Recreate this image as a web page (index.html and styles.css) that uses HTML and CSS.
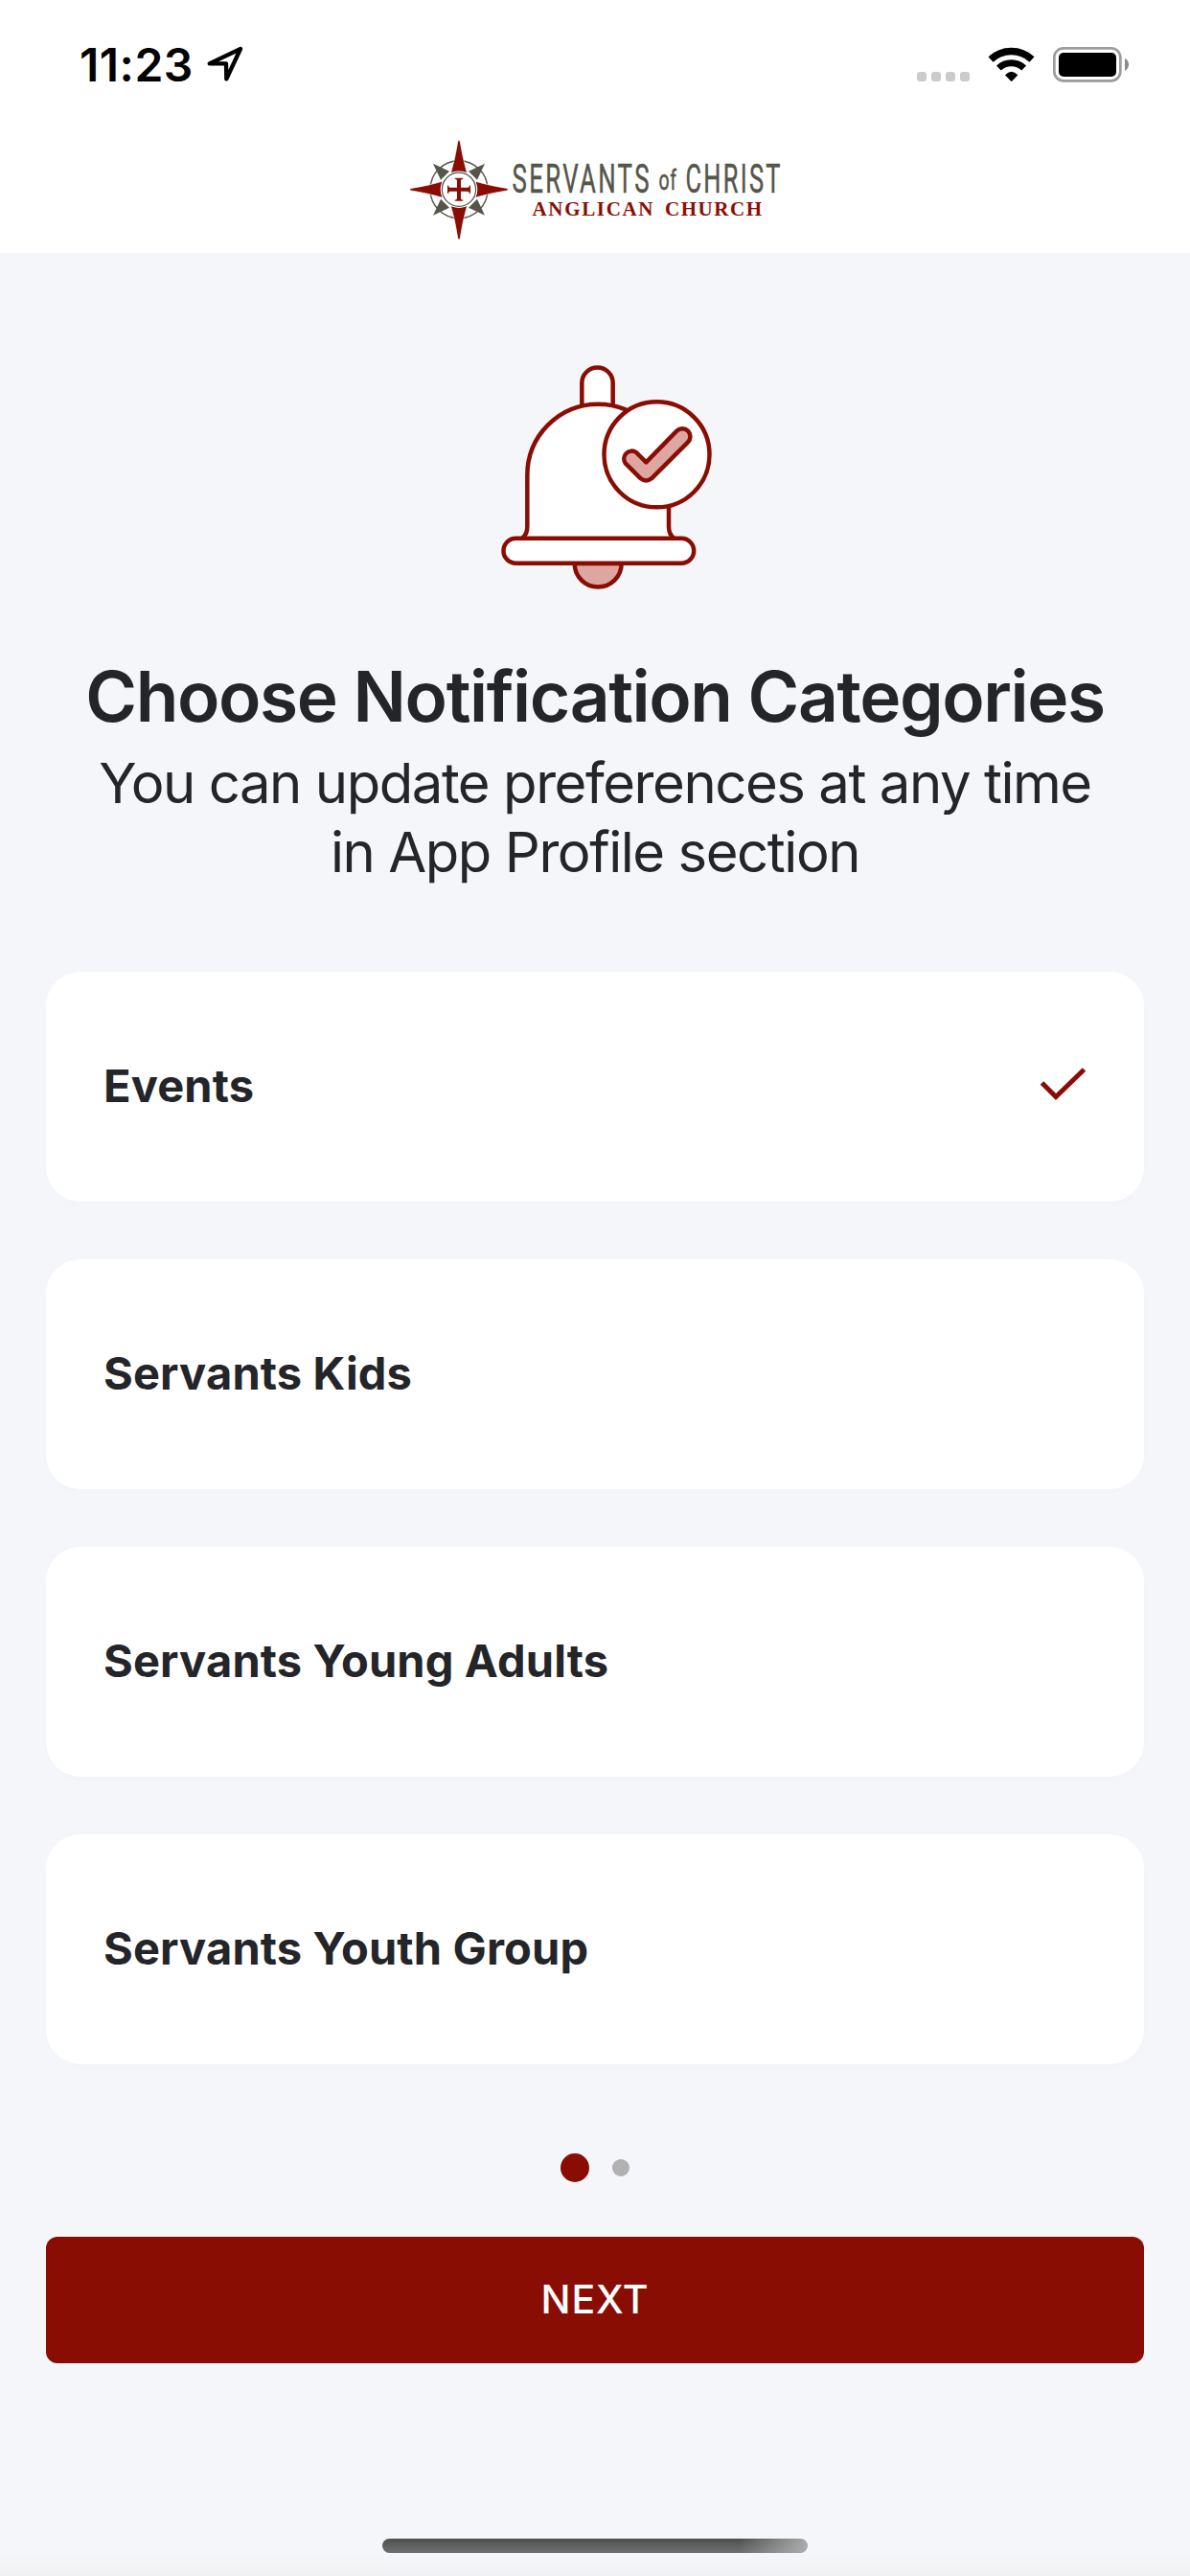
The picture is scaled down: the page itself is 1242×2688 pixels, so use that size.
FILE: index.html
```html
<!DOCTYPE html>
<html lang="en">
<head>
  <meta charset="UTF-8">
  <meta name="viewport" content="width=device-width, initial-scale=1.0">
  <title>Choose Notification Categories</title>
  <link rel="stylesheet" href="styles.css">
</head>
<body>
  <div class="screen">
    <header class="header">
      <div class="status-bar">
        <span class="time">11:23</span>
        <svg class="location" width="38" height="38" viewBox="0 0 114 114">
          <path d="M8 55 L105 9 L61 103 L60 55 Z" fill="none" stroke="#000" stroke-width="13" stroke-linejoin="round"/>
        </svg>
        <svg class="status-icons" width="224" height="40" viewBox="0 0 672 120">
          <g fill="#cbcbcb">
            <rect x="0" y="81" width="30" height="30" rx="9"/>
            <rect x="45" y="81" width="30" height="30" rx="9"/>
            <rect x="90" y="81" width="30" height="30" rx="9"/>
            <rect x="135" y="81" width="30" height="30" rx="9"/>
          </g>
          <path d="M231 42 A94 94 0 0 1 360 42" fill="none" stroke="#000" stroke-width="22"/>
          <path d="M256 69 A58 58 0 0 1 335 69" fill="none" stroke="#000" stroke-width="21"/>
          <path d="M276 91 Q296 69 316 91 L299 109 Q296 112 293 109 Z" fill="#000"/>
          <rect x="430" y="7" width="207" height="102" rx="29" fill="none" stroke="#9c9c9c" stroke-width="8"/>
          <rect x="444" y="21" width="180" height="75" rx="15" fill="#000"/>
          <path d="M651 38 Q663 44 663 58 Q663 72 651 78 Z" fill="#8c8c8c"/>
        </svg>
      </div>
      <svg class="logo" width="390" height="104" viewBox="428 146 390 104">
        <g transform="translate(479 197.7)">
          <circle r="30" fill="none" stroke="#56554a" stroke-width="1.4"/>
          <g fill="#56554a">
            <path d="M-27 -27 L-10 -19 L-19 -10 Z"/>
            <path d="M27 -27 L10 -19 L19 -10 Z"/>
            <path d="M-27 27 L-10 19 L-19 10 Z"/>
            <path d="M27 27 L10 19 L19 10 Z"/>
          </g>
          <g fill="#8a0d04" stroke="#fff" stroke-width="0.6">
            <path d="M-1 -51 H1 Q4 -32 8.500 -17 H-8.500 Q-4 -32 -1 -51 Z"/>
            <path d="M-1 52 H1 Q4 32 8.500 17 H-8.500 Q-4 32 -1 52 Z"/>
            <path d="M-51 -1 V1 Q-32 4 -17 8.500 V-8.500 Q-32 -4 -51 -1 Z"/>
            <path d="M51 -1 V1 Q32 4 17 8.500 V-8.500 Q32 -4 51 -1 Z"/>
          </g>
          <circle r="19.3" fill="#fff"/>
          <circle r="17.6" fill="none" stroke="#56554a" stroke-width="1.2"/>
          <path d="M-4.300 -12 H4.300 V-11 Q2 -11 2 -9 V-2 H9 Q11 -2 11 -4.300 H12 V4.300 H11 Q11 2 9 2 H2 V9 Q2 11 4.300 11 V12 H-4.300 V11 Q-2 11 -2 9 V2 H-9 Q-11 2 -11 4.300 H-12 V-4.300 H-11 Q-11 -2 -9 -2 H-2 V-9 Q-2 -11 -4.300 -11 Z" fill="#8a0d04"/>
        </g>
        <g class="logo-name">
          <text transform="translate(534.5 200.6) scale(0.615 1)">SERVANTS</text>
          <text class="logo-of" transform="translate(687.5 197.5) scale(0.65 1)">of</text>
          <text transform="translate(715.5 200.6) scale(0.605 1)">CHRIST</text>
        </g>
        <g class="logo-sub">
          <text x="555.5" y="225" textLength="128">ANGLICAN</text>
          <text x="694" y="225" textLength="103">CHURCH</text>
        </g>
      </svg>
    </header>

    <main class="content">
      <svg class="bell" width="260" height="270" viewBox="0 0 780 810">
        <g fill="#fff" stroke="#8a0d04" stroke-width="13.5">
          <path d="M322 200 V119 A48.500 48.500 0 0 1 419 119 V200"/>
          <path d="M135 604 Q151 594 151 568 V408 A221.500 223 0 0 1 594 408 V568 Q594 594 610 604"/>
          <path d="M299 684 A73.500 73.500 0 0 0 446 684 Z" fill="#dea6a1"/>
          <rect x="76.500" y="605" width="596" height="78" rx="39"/>
          <circle cx="556.500" cy="343" r="165"/>
          <path d="M523 367 L492 336 A24.500 24.500 0 0 0 458 370 L506 418 Q523 431 540 418 L654 304 A24.500 24.500 0 0 0 619 269 Z" fill="#dea6a1" stroke-linejoin="round"/>
        </g>
      </svg>

      <h1>Choose Notification Categories</h1>
      <p class="subtitle">You can update preferences at any time<br>in App Profile section</p>

      <ul class="categories">
        <li class="category">
          <span>Events</span>
          <svg width="50" height="36" viewBox="0 0 50 36">
            <path d="M3.500 16 L18 30.500 L47.500 2" fill="none" stroke="#8a0d04" stroke-width="5"/>
          </svg>
        </li>
        <li class="category"><span>Servants Kids</span></li>
        <li class="category"><span>Servants Young Adults</span></li>
        <li class="category"><span>Servants Youth Group</span></li>
      </ul>

      <div class="dots">
        <span class="dot active"></span>
        <span class="dot"></span>
      </div>

      <button type="button" class="next">NEXT</button>
    </main>

    <div class="home-indicator"></div>
  </div>
</body>
</html>
```
FILE: styles.css
```css
* {
  box-sizing: border-box;
}

body {
  margin: 0;
  font-family: Inter, "Liberation Sans", sans-serif;
  color: #242529;
  background-color: #f4f6fa;
}

.screen {
  display: flex;
  flex-direction: column;
  width: 1242px;
  height: 2688px;
  background: linear-gradient(#f4f6fa 2665px, #eff1f2 2688px);
}

.header {
  height: 264px;
  background-color: #fff;
}

.status-bar {
  display: flex;
  align-items: flex-start;
  height: 146px;
  padding: 48px 61px 0 83px;
}

.time {
  width: 133px;
  font-size: 48px;
  font-weight: 600;
  line-height: 40px;
  letter-spacing: 0.5px;
  color: #000;
}

.status-icons {
  margin-left: auto;
}

.logo {
  display: block;
  margin-left: 428px;
}

.logo-name {
  font-family: Roboto, sans-serif;
  font-size: 42px;
  font-weight: 400;
  letter-spacing: 3.8px;
  fill: #56554a;
  stroke: #56554a;
  stroke-width: 0.5px;
}

.logo-of {
  font-size: 30px;
  letter-spacing: 1px;
}

.logo-sub {
  font-family: "Liberation Serif", serif;
  font-size: 21px;
  font-weight: 700;
  letter-spacing: 2px;
  fill: #8a0d04;
}

.content {
  flex: 1;
  padding: 96px 48px 0;
}

.bell {
  display: block;
  margin-left: 452px;
}

h1 {
  margin: 48px 0 0;
  font-size: 73px;
  font-weight: 600;
  line-height: 98px;
  letter-spacing: -1.4px;
  text-align: center;
  white-space: nowrap;
}

.subtitle {
  margin: 5px 0 0;
  font-size: 58px;
  line-height: 72px;
  letter-spacing: -1.45px;
  text-align: center;
  white-space: nowrap;
}

.categories {
  display: flex;
  flex-direction: column;
  gap: 60px;
  margin: 89px 0 0;
  padding: 0;
  list-style: none;
}

.category {
  display: flex;
  align-items: center;
  justify-content: space-between;
  height: 240px;
  padding: 0 60px;
  font-size: 47px;
  font-weight: 700;
  letter-spacing: 0.15px;
  border-radius: 36px;
  background-color: #fff;
  box-shadow: 0 3px 9px rgba(0, 0, 0, 0.01);
}

.category span {
  margin-bottom: 3px;
}

.category svg {
  margin-bottom: 4px;
}

.dots {
  display: flex;
  align-items: center;
  justify-content: center;
  gap: 24px;
  height: 30px;
  margin-top: 93px;
}

.dot {
  width: 18px;
  height: 18px;
  border-radius: 50%;
  background-color: #b1b1b1;
}

.dot.active {
  width: 30px;
  height: 30px;
  background-color: #8a0d04;
}

.next {
  display: block;
  width: 100%;
  height: 132px;
  margin-top: 57px;
  padding: 0 0 2px;
  border: none;
  border-radius: 12px;
  font-family: inherit;
  font-size: 41px;
  font-weight: 500;
  letter-spacing: 0.8px;
  color: #fff;
  background-color: #8a0d04;
}

.home-indicator {
  width: 444px;
  height: 15px;
  margin: 0 auto 24px;
  border-radius: 8px;
  background: linear-gradient(90deg, transparent 84%, rgba(190, 190, 190, 0.8)), linear-gradient(#4d4f4e, #707073);
}
```
